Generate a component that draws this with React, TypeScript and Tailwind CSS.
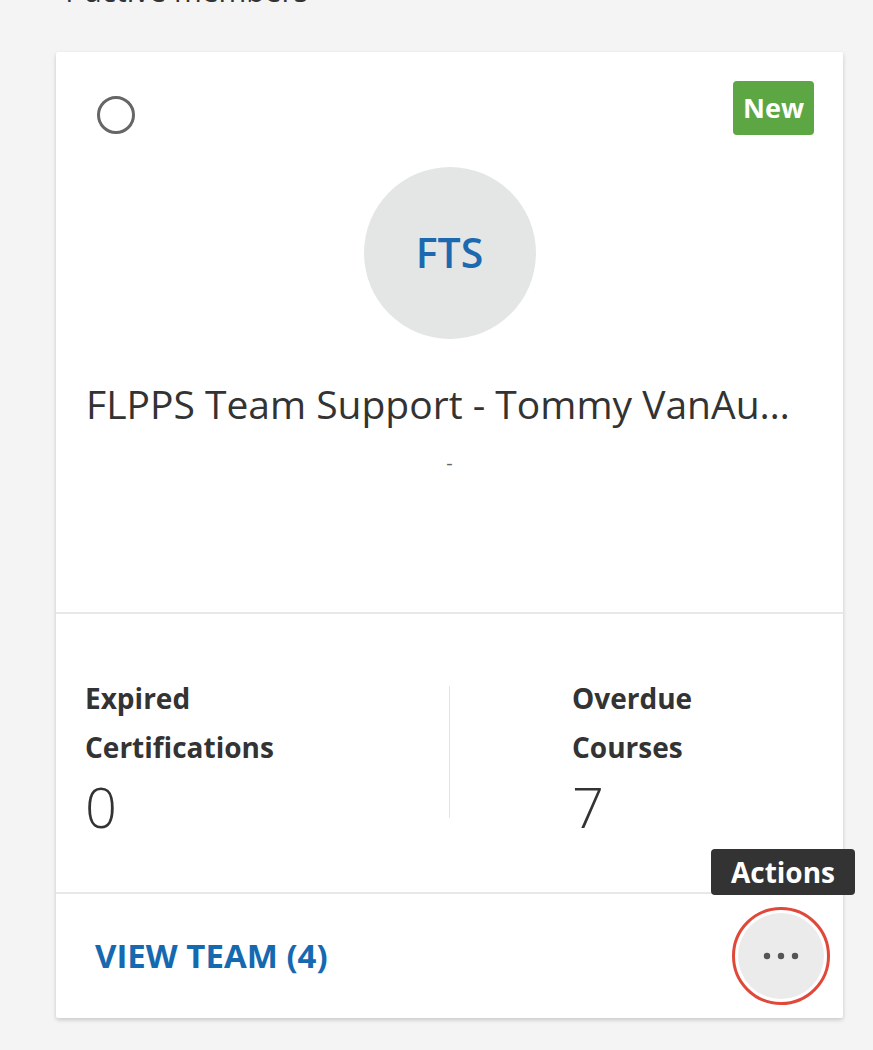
const font = { fontFamily: '"Open Sans", "Noto Sans", sans-serif' };

function Stat({ top, bottom, value }: { top: string; bottom: string; value: number }) {
  return (
    <div className="flex flex-col">
      <div className="text-[28px] font-bold leading-[49px] text-[#333]">
        {top}
        <br />
        {bottom}
      </div>
      <div className="mt-[2px] text-[56px] font-light leading-[64px] text-[#333]">{value}</div>
    </div>
  );
}

export default function App() {
  return (
    <div className="min-h-[1050px] w-[873px] overflow-hidden bg-[#f4f4f4]" style={font}>
      <div className="-mt-[30px] h-[82px] pl-[60px] text-[30px] leading-[42px] text-[#333]">1 active members</div>

      <div className="relative ml-[56px] w-[787px] rounded-[2px] bg-white shadow-[0_2px_4px_rgba(0,0,0,0.18)]">
        {/* header */}
        <div className="flex h-[562px] flex-col border-b-2 border-[#e8e8e8]">
          <div className="flex items-start justify-between px-[41px] pt-[29px]">
            <div className="mt-[15px] h-[38px] w-[38px] rounded-full border-[3px] border-[#666]" />
            <div className="-mr-[12px] rounded-[4px] bg-[#5da644] px-[10px] text-[27px] font-bold leading-[54px] text-white">
              New
            </div>
          </div>
          <div className="mt-[32px] flex justify-center">
            <div className="flex h-[172px] w-[172px] items-center justify-center rounded-full bg-[#e4e6e6] text-[41px] font-semibold text-[#1d69b0]">
              FTS
            </div>
          </div>
          <div className="mt-[40px] truncate pl-[30px] pr-[44px] text-[39px] leading-[50px] text-[#333]">
            FLPPS Team Support - Tommy VanAuken Support
          </div>
          <div className="mt-[22px] text-center text-[20px] leading-[24px] text-[#666]">-</div>
        </div>

        {/* stats */}
        <div className="flex h-[280px] items-start border-b-2 border-[#e8e8e8] pt-[60px]">
          <div className="w-[393px] pl-[29px]">
            <Stat top="Expired" bottom="Certifications" value={0} />
          </div>
          <div className="mt-[12px] h-[132px] w-px bg-[#e4e4e4]" />
          <div className="pl-[122px]">
            <Stat top="Overdue" bottom="Courses" value={7} />
          </div>
        </div>

        {/* footer */}
        <div className="flex h-[124px] items-center justify-between pl-[39px] pr-[13px]">
          <span className="text-[33px] font-bold text-[#1569b0]">VIEW TEAM (4)</span>
          <div className="flex h-[98px] w-[98px] items-center justify-center rounded-full border-[3px] border-[#e0483a] p-[3px]">
            <div className="flex h-full w-full items-center justify-center rounded-full bg-[#ebebeb]">
              <svg width="36" height="8" viewBox="0 0 36 8" className="text-[#555]">
                <circle cx="4" cy="4" r="3.2" fill="currentColor" />
                <circle cx="18" cy="4" r="3.2" fill="currentColor" />
                <circle cx="32" cy="4" r="3.2" fill="currentColor" />
              </svg>
            </div>
          </div>
        </div>

        <div className="absolute -right-[12px] top-[797px] rounded-[4px] bg-[#333] px-[20px] text-[28px] font-bold leading-[46px] text-white">
          Actions
        </div>
      </div>
    </div>
  );
}
